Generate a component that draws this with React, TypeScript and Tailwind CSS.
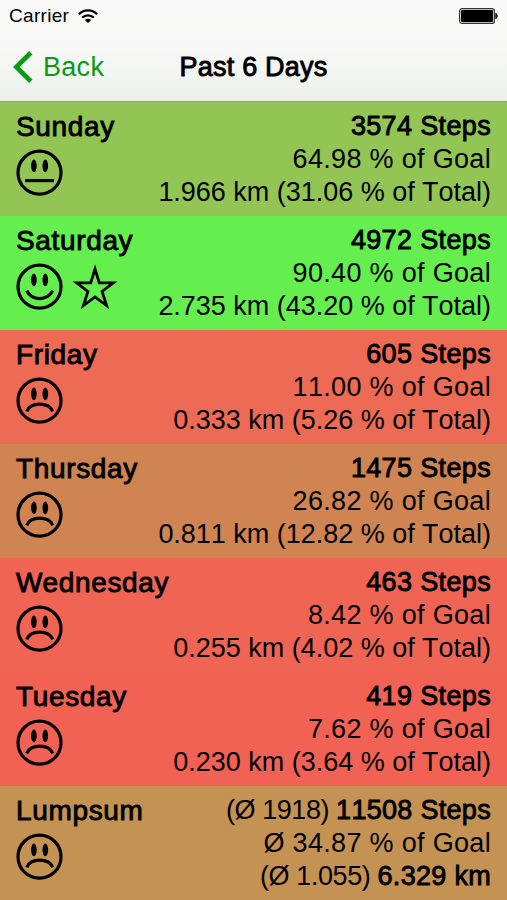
import type { ReactNode } from "react";

type Mood = "happy" | "neutral" | "sad";

const MOUTHS: Record<Mood, string> = {
  happy: "M10.7 27.8C16.2 38.2 30.8 38.2 36.8 27.8",
  neutral: "M9.2 31.6H38",
  sad: "M10.7 34.3C15 24.8 32.4 24.8 36.8 34.3",
};

function Face({ mood }: { mood: Mood }) {
  return (
    <svg width="47" height="47" viewBox="0 0 47 47" fill="none" stroke="#000" strokeWidth="3.2">
      <circle cx="23.5" cy="23.7" r="21.5" />
      <ellipse cx="17.9" cy="16.9" rx="2.8" ry="6.3" fill="#000" stroke="none" />
      <ellipse cx="29.3" cy="16.9" rx="2.8" ry="6.3" fill="#000" stroke="none" />
      <path d={MOUTHS[mood]} />
    </svg>
  );
}

function Star() {
  return (
    <svg width="47" height="47" viewBox="0 0 47 47" fill="none" stroke="#000" strokeWidth="2.8">
      <path d="M24 6L28.3 19.9H42.3L31.1 28.4L35.6 42.6L24 33.9L12.4 42.6L16.9 28.4L5.7 19.9H19.7Z" />
    </svg>
  );
}

function Medium({ children, className = "tracking-[0.35px]" }: { children: ReactNode; className?: string }) {
  return (
    <span className={`[-webkit-text-stroke:0.9px_#000] ${className}`}>{children}</span>
  );
}

interface Day {
  name: string;
  mood: Mood;
  star?: boolean;
  color: string;
  steps: ReactNode;
  goal: string;
  distance: ReactNode;
}

const DAYS: Day[] = [
  {
    name: "Sunday",
    mood: "neutral",
    color: "bg-[#92c553]",
    steps: <Medium>3574 Steps</Medium>,
    goal: "64.98 % of Goal",
    distance: "1.966 km (31.06 % of Total)",
  },
  {
    name: "Saturday",
    mood: "happy",
    star: true,
    color: "bg-[#65ef4e]",
    steps: <Medium>4972 Steps</Medium>,
    goal: "90.40 % of Goal",
    distance: "2.735 km (43.20 % of Total)",
  },
  {
    name: "Friday",
    mood: "sad",
    color: "bg-[#ed6a54]",
    steps: <Medium>605 Steps</Medium>,
    goal: "11.00 % of Goal",
    distance: "0.333 km (5.26 % of Total)",
  },
  {
    name: "Thursday",
    mood: "sad",
    color: "bg-[#cf8451]",
    steps: <Medium>1475 Steps</Medium>,
    goal: "26.82 % of Goal",
    distance: "0.811 km (12.82 % of Total)",
  },
  {
    name: "Wednesday",
    mood: "sad",
    color: "bg-[#f06454]",
    steps: <Medium>463 Steps</Medium>,
    goal: "8.42 % of Goal",
    distance: "0.255 km (4.02 % of Total)",
  },
  {
    name: "Tuesday",
    mood: "sad",
    color: "bg-[#f16254]",
    steps: <Medium>419 Steps</Medium>,
    goal: "7.62 % of Goal",
    distance: "0.230 km (3.64 % of Total)",
  },
  {
    name: "Lumpsum",
    mood: "sad",
    color: "bg-[#c49252]",
    steps: (
      <>
        <span className="tracking-[-0.45px]">(Ø 1918) </span>
        <Medium className="tracking-[0.3px]">11508 Steps</Medium>
      </>
    ),
    goal: "Ø 34.87 % of Goal",
    distance: (
      <>
        <span className="tracking-[-0.4px]">(Ø 1.055) </span>
        <Medium className="tracking-[0.3px]">6.329 km</Medium>
      </>
    ),
  },
];

function DayRow({ day }: { day: Day }) {
  return (
    <li className={`flex h-[114px] justify-between px-4 pt-2 ${day.color}`}>
      <div>
        <h2 className="text-[28px] leading-[33px]">
          <Medium className="tracking-[0.65px]">{day.name}</Medium>
        </h2>
        <div className="mt-1.5 flex gap-2">
          <Face mood={day.mood} />
          {day.star && <Star />}
        </div>
      </div>
      <div className="text-right leading-[33px] whitespace-nowrap [font-kerning:none]">
        <p>{day.steps}</p>
        <p className="tracking-[0.32px]">{day.goal}</p>
        <p className="tracking-[-0.02px]">{day.distance}</p>
      </div>
    </li>
  );
}

export default function App() {
  return (
    <main className="h-[900px] w-[507px] overflow-hidden font-['Liberation_Sans',Arial,sans-serif] text-[27px] text-black">
      <header className="h-[102px] border-b border-[#8ba36c] bg-linear-to-b from-[#f9f9f9] via-[#f7f8f6] to-[#ebf1ea]">
        <div className="flex h-8 items-center justify-between pr-[9px] pl-[9px]">
          <div className="flex items-center gap-[9px]">
            <span className="text-[19px] tracking-[0.3px]">Carrier</span>
            <svg width="20" height="15" viewBox="0 0 20 15" fill="none" stroke="#000" strokeWidth="2.2">
              <path d="M1 5.2C6 .2 14 .2 19 5.2" />
              <path d="M4.2 8.6C7.5 5.5 12.5 5.5 15.8 8.6" />
              <path d="M10 14L6.8 10.9C8.6 9.3 11.4 9.3 13.2 10.9Z" fill="#000" stroke="none" />
            </svg>
          </div>
          <svg width="39" height="16" viewBox="0 0 39 16">
            <rect x=".6" y=".6" width="34.8" height="14.8" rx="2.5" fill="#eee" stroke="#333" strokeWidth="1.2" />
            <rect x="2" y="2" width="32" height="12" rx="1" fill="#000" />
            <path d="M36.3 5C39.4 5.2 39.4 10.8 36.3 11Z" fill="#000" />
          </svg>
        </div>
        <nav className="grid h-[69px] grid-cols-[1fr_auto_1fr] pr-[13px] pl-[13px] leading-[70px]">
          <a className="flex items-center gap-[10px] text-[#0b9a14]">
            <svg width="20" height="32" viewBox="0 0 20 32" fill="none" stroke="currentColor" strokeWidth="4.8">
              <path d="M17.8 1.7L3.3 16L17.8 30.3" />
            </svg>
            <span className="tracking-[0.3px]">Back</span>
          </a>
          <h1>
            <Medium className="tracking-[0.2px]">Past 6 Days</Medium>
          </h1>
        </nav>
      </header>
      <ul>
        {DAYS.map((day) => (
          <DayRow key={day.name} day={day} />
        ))}
      </ul>
    </main>
  );
}
